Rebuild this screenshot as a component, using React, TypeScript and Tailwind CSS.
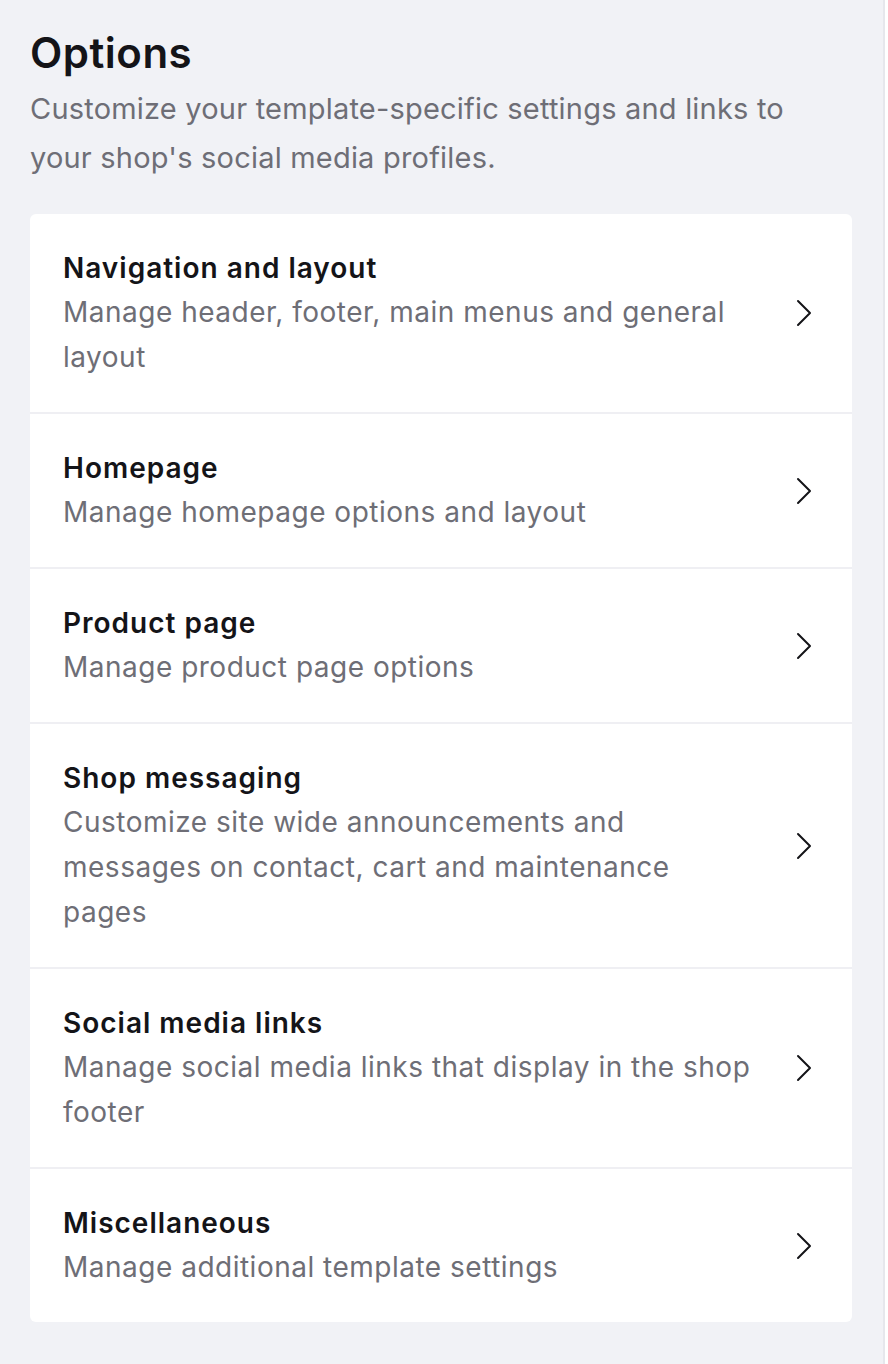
import React from 'react';
import { ChevronRight } from 'lucide-react';

interface OptionRowProps {
  title: string;
  description: string;
}

const options: OptionRowProps[] = [
  { title: 'Navigation and layout', description: 'Manage header, footer, main menus and general layout' },
  { title: 'Homepage', description: 'Manage homepage options and layout' },
  { title: 'Product page', description: 'Manage product page options' },
  {
    title: 'Shop messaging',
    description: 'Customize site wide announcements and messages on contact, cart and maintenance pages',
  },
  { title: 'Social media links', description: 'Manage social media links that display in the shop footer' },
  { title: 'Miscellaneous', description: 'Manage additional template settings' },
];

const OptionRow: React.FC<OptionRowProps> = ({ title, description }) => (
  <button className="flex w-full items-center text-left pl-[33px] pr-[42px] py-[32px] border-b-2 border-[#efeff3] last:border-b-0">
    <div className="flex-1 pr-[26px]">
      <div className="text-[28px] leading-[44px] font-semibold text-[#141418] tracking-[1px]">{title}</div>
      <div className="text-[28px] leading-[45px] text-[#6e6e76] tracking-[0.5px]">{description}</div>
    </div>
    <ChevronRight size={48} strokeWidth={1} className="text-[#141418] -mr-[18px] shrink-0" />
  </button>
);

export default function App() {
  return (
    <div
      className="min-h-screen w-[885px] bg-[#f1f2f6] border-r-2 border-[#e6e7ec] pl-[30px] pt-[28px] pb-[40px]"
      style={{ fontFamily: 'Inter, "Noto Sans", sans-serif' }}
    >
      <h1 className="text-[42px] leading-[50px] font-semibold text-[#141418] tracking-[0.5px]">Options</h1>
      <p className="mt-[6px] text-[29px] leading-[49px] text-[#6e6e76] tracking-[0.2px] w-[800px]">
        Customize your template-specific settings and links to your shop's social media profiles.
      </p>
      <div className="mt-[32px] w-[822px] bg-white rounded-[6px] overflow-hidden">
        {options.map((o) => (
          <OptionRow key={o.title} {...o} />
        ))}
      </div>
    </div>
  );
}
